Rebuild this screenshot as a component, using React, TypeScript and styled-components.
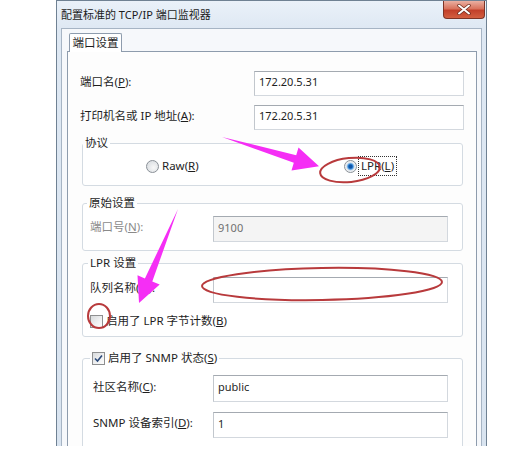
import React from 'react';
import styled, { createGlobalStyle } from 'styled-components';

const Global = createGlobalStyle`
  html, body { margin: 0; padding: 0; background: #fff; }
  body {
    width: 529px; height: 466px; overflow: hidden;
    font-family: "Noto Sans", "Noto Sans CJK SC", sans-serif;
    color: #1e1e1e;
  }
`;

const Stage = styled.div`
  position: relative;
  width: 529px;
  height: 466px;
  background: #fff;
`;

const Window = styled.div`
  margin-left: 56px;
  width: 431px;
  height: 446px;
  box-sizing: border-box;
  overflow: hidden;
  display: flex;
  flex-direction: column;
  padding: 0 4px 0 4px;
  border-left: 1px solid #6f8193;
  border-right: 1px solid #6f8193;
  border-top: 1px solid #6f8193;
  background: linear-gradient(180deg, #eaf1f9 0px, #dee8f3 28px, #d9e4f0 100%);
`;

const TitleBar = styled.div`
  height: 27px;
  display: flex;
  justify-content: space-between;
  align-items: flex-start;
`;

const Title = styled.div`
  font-size: 11px;
  line-height: 14px;
  padding-top: 7px;
  color: #1b1b1b;
  white-space: nowrap;
`;

const CloseButton = styled.div`
  width: 42px;
  height: 18px;
  margin-right: -3px;
  box-sizing: border-box;
  border: 1px solid #7d3426;
  border-top: none;
  border-radius: 0 0 4px 4px;
  background: linear-gradient(180deg, #eab0a2 0%, #d9735d 45%, #c2402a 55%, #d35f40 100%);
  display: flex;
  align-items: center;
  justify-content: center;
`;

const Client = styled.div`
  flex: 1;
  display: flex;
  flex-direction: column;
  box-sizing: border-box;
  padding: 4px 4px 0 5px;
  border: 1px solid #a6b4c4;
  border-bottom: none;
  background: #f6f8fb;
  min-height: 0;
`;

const TabStrip = styled.div`
  display: flex;
  height: 18px;
  padding-left: 2px;
`;

const Tab = styled.div`
  width: 53px;
  height: 19px;
  box-sizing: border-box;
  border: 1px solid #8e9cad;
  border-bottom: none;
  border-radius: 2px 2px 0 0;
  background: #fff;
  font-size: 11.5px;
  line-height: 18px;
  text-align: center;
  position: relative;
  z-index: 1;
`;

const Panel = styled.div`
  flex: 1;
  box-sizing: border-box;
  border: 1px solid #8e9cad;
  border-bottom: none;
  background: #fdfdfd;
  padding: 19px 12px 0 12px;
  display: flex;
  flex-direction: column;
`;

const TopRow = styled.div<{ $gap?: number }>`
  display: grid;
  grid-template-columns: 174px 1fr;
  align-items: center;
  margin-top: ${p => p.$gap ?? 0}px;
`;

const Label = styled.div<{ $muted?: boolean }>`
  font-size: 11.5px;
  line-height: 16px;
  padding-bottom: 4px;
  white-space: nowrap;
  color: ${p => (p.$muted ? '#8a8a8a' : '#1e1e1e')};
`;

const Field = styled.div<{ $muted?: boolean; $h?: number }>`
  height: ${p => p.$h ?? 26}px;
  box-sizing: border-box;
  border: 1px solid #d3d8de;
  border-top-color: #a4aab1;
  border-left-color: #c2c7cd;
  background: ${p => (p.$muted ? '#f4f4f4' : '#fff')};
  color: ${p => (p.$muted ? '#707070' : '#1f1f1f')};
  font-size: 11px;
  padding: 0 3px 4px 4px;
  display: flex;
  align-items: center;
`;

const Group = styled.fieldset<{ $gap: number }>`
  margin: ${p => p.$gap}px 1px 0 2px;
  padding: 0;
  border: 1px solid #d4dbe2;
  border-radius: 3px;
  background: #fff;
  min-width: 0;
`;

const Legend = styled.legend<{ $indent: number }>`
  margin-left: ${p => p.$indent}px;
  padding: 0 2px;
  font-size: 11.5px;
  line-height: 16px;
  display: flex;
  align-items: center;
  gap: 3px;
  white-space: nowrap;
`;

const GroupBody = styled.div<{ $pad: string }>`
  padding: ${p => p.$pad};
  display: flex;
  flex-direction: column;
`;

const GroupRow = styled.div<{ $col: number; $gap?: number }>`
  display: grid;
  grid-template-columns: ${p => p.$col}px 1fr;
  align-items: center;
  margin-top: ${p => p.$gap ?? 0}px;
`;

const RadioRow = styled.div`
  display: grid;
  grid-template-columns: 198px auto;
  justify-content: start;
  padding-left: 63px;
  height: 18px;
  align-items: center;
`;

const Choice = styled.label<{ $gap?: number }>`
  display: flex;
  align-items: center;
  gap: 3px;
  font-size: 11.5px;
  line-height: 16px;
  min-height: 18px;
  margin-top: ${p => p.$gap ?? 0}px;
  white-space: nowrap;
`;

const RadioDot = styled.span<{ $on?: boolean }>`
  width: 13px;
  height: 13px;
  flex: none;
  box-sizing: border-box;
  border-radius: 50%;
  border: 1px solid #8a9097;
  background: ${p =>
    p.$on
      ? 'radial-gradient(circle, #0f55a8 0 1.6px, #3f93e0 2.6px, #9cc3e8 3.4px, #e4e9ee 4.2px, #f6f7f8 6px)'
      : 'radial-gradient(circle at 60% 60%, #f8f8f8 0, #e0e3e6 6px)'};
`;

const Focus = styled.span`
  outline: 1px dotted #333;
  outline-offset: 1px;
  padding: 0 1px;
`;

const CheckBox = styled.span`
  width: 13px;
  height: 13px;
  flex: none;
  box-sizing: border-box;
  border: 1px solid #8e8f90;
  background: linear-gradient(135deg, #d8dadc 0%, #f1f2f3 60%, #fdfdfd 100%);
  display: inline-flex;
  align-items: center;
  justify-content: center;
`;

const Overlay = styled.svg`
  position: absolute;
  left: 0;
  top: 0;
  width: 529px;
  height: 466px;
  pointer-events: none;
`;

const Check = ({ on }: { on?: boolean }) => (
  <CheckBox>
    {on && (
      <svg width="9" height="9" viewBox="0 0 9 9">
        <path d="M1 4.5 L3.5 7 L8 1.5" fill="none" stroke="#2c4a7a" strokeWidth="1.6" />
      </svg>
    )}
  </CheckBox>
);

export default function App() {
  return (
    <Stage>
      <Global />
      <Window>
        <TitleBar>
          <Title>配置标准的 TCP/IP 端口监视器</Title>
          <CloseButton>
            <svg width="14" height="11" viewBox="0 0 14 11">
              <path d="M2 1.5 L12 9.5 M12 1.5 L2 9.5" stroke="#6b2a1c" strokeWidth="3.4" strokeLinecap="round" />
              <path d="M2 1.5 L12 9.5 M12 1.5 L2 9.5" stroke="#fff" strokeWidth="2" strokeLinecap="round" />
            </svg>
          </CloseButton>
        </TitleBar>
        <Client>
          <TabStrip>
            <Tab>端口设置</Tab>
          </TabStrip>
          <Panel>
            <TopRow>
              <Label>端口名(<u>P</u>):</Label>
              <Field $h={25}>172.20.5.31</Field>
            </TopRow>
            <TopRow $gap={9}>
              <Label>打印机名或 IP 地址(<u>A</u>):</Label>
              <Field $h={25}>172.20.5.31</Field>
            </TopRow>

            <Group $gap={5}>
              <Legend $indent={0}>协议</Legend>
              <GroupBody $pad="6px 0 10px 0">
                <RadioRow>
                  <Choice>
                    <RadioDot />
                    <span>Raw(<u>R</u>)</span>
                  </Choice>
                  <Choice>
                    <RadioDot $on />
                    <Focus>LPR(<u>L</u>)</Focus>
                  </Choice>
                </RadioRow>
              </GroupBody>
            </Group>

            <Group $gap={9}>
              <Legend $indent={4}>原始设置</Legend>
              <GroupBody $pad="5px 14px 8px 7px">
                <GroupRow $col={123}>
                  <Label $muted>端口号(<u>N</u>):</Label>
                  <Field $muted>9100</Field>
                </GroupRow>
              </GroupBody>
            </Group>

            <Group $gap={4}>
              <Legend $indent={5}>LPR 设置</Legend>
              <GroupBody $pad="6px 14px 6px 7px">
                <GroupRow $col={123}>
                  <Label>队列名称(<u>Q</u>):</Label>
                  <Field />
                </GroupRow>
                <Choice $gap={9}>
                  <Check />
                  <span>启用了 LPR 字节计数(<u>B</u>)</span>
                </Choice>
              </GroupBody>
            </Group>

            <Group $gap={13}>
              <Legend $indent={7}>
                <Check on />
                <span>启用了 SNMP 状态(<u>S</u>)</span>
              </Legend>
              <GroupBody $pad="9px 14px 20px 10px">
                <GroupRow $col={120}>
                  <Label>社区名称(<u>C</u>):</Label>
                  <Field $h={27}>public</Field>
                </GroupRow>
                <GroupRow $col={120} $gap={10}>
                  <Label>SNMP 设备索引(<u>D</u>):</Label>
                  <Field>1</Field>
                </GroupRow>
              </GroupBody>
            </Group>
          </Panel>
        </Client>
      </Window>

      <Overlay viewBox="0 0 529 466">
        <polygon
          points="222,137 296.2,155.2 298.5,147.5 319,166.3 291.5,170.5 293.8,162.8"
          fill="#f52ef5"
        />
        <polygon
          points="178,209 152.3,281.4 159.7,284.5 139,303 137.5,275.3 144.9,278.4"
          fill="#f52ef5"
        />
        <ellipse cx="350" cy="170" rx="30" ry="12" transform="rotate(-6 350 170)" fill="none" stroke="#b83a3c" strokeWidth="2" />
        <ellipse cx="322" cy="284" rx="120" ry="16" transform="rotate(-1 322 284)" fill="none" stroke="#b83a3c" strokeWidth="2" />
        <ellipse cx="99" cy="316" rx="11" ry="12" fill="none" stroke="#b83a3c" strokeWidth="2" />
      </Overlay>
    </Stage>
  );
}
